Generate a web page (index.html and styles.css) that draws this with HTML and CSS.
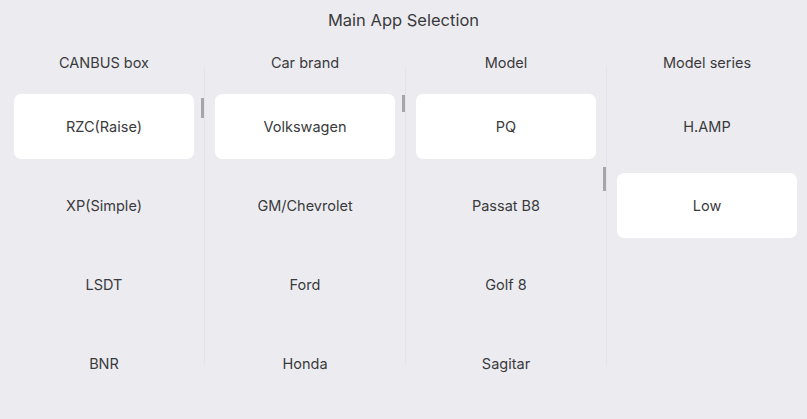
FILE: index.html
```html
<!DOCTYPE html>
<html>
<head>
<meta charset="utf-8">
<link rel="stylesheet" href="styles.css">
</head>
<body>
<div class="page">
  <h1 class="title">Main App Selection</h1>
  <div class="columns">
    <div class="col">
      <div class="col-head">CANBUS box</div>
      <div class="list">
        <div class="item selected">RZC(Raise)</div>
        <div class="item">XP(Simple)</div>
        <div class="item">LSDT</div>
        <div class="item">BNR</div>
      </div>
      <div class="thumb thumb-1"></div>
    </div>
    <div class="divider"></div>
    <div class="col">
      <div class="col-head">Car brand</div>
      <div class="list">
        <div class="item selected">Volkswagen</div>
        <div class="item">GM/Chevrolet</div>
        <div class="item">Ford</div>
        <div class="item">Honda</div>
      </div>
      <div class="thumb thumb-2"></div>
    </div>
    <div class="divider"></div>
    <div class="col">
      <div class="col-head">Model</div>
      <div class="list">
        <div class="item selected">PQ</div>
        <div class="item">Passat B8</div>
        <div class="item">Golf 8</div>
        <div class="item">Sagitar</div>
      </div>
      <div class="thumb thumb-3"></div>
    </div>
    <div class="divider"></div>
    <div class="col">
      <div class="col-head">Model series</div>
      <div class="list">
        <div class="item">H.AMP</div>
        <div class="item selected">Low</div>
      </div>
    </div>
  </div>
</div>
</body>
</html>
```

FILE: styles.css
```css
html, body {
  margin: 0;
  padding: 0;
  background: #ececf0;
}
body {
  font-family: Inter, "Noto Sans", sans-serif;
  color: #3a3a3d;
  width: 807px;
  height: 419px;
  overflow: hidden;
}
.page {
  display: flex;
  flex-direction: column;
}
.title {
  margin: 0;
  height: 40px;
  line-height: 40px;
  text-align: center;
  font-size: 16.5px;
  font-weight: 400;
}
.columns {
  display: grid;
  grid-template-columns: 200px 1px 200px 1px 200px 1px 200px;
  padding-left: 4px;
  align-items: start;
}
.col {
  position: relative;
  display: flex;
  flex-direction: column;
}
.col-head {
  height: 20px;
  line-height: 20px;
  margin-top: 13px;
  text-align: center;
  font-size: 14.5px;
}
.list {
  display: flex;
  flex-direction: column;
  gap: 14px;
  padding: 21px 10px 0 10px;
}
.item {
  height: 65px;
  display: flex;
  align-items: center;
  justify-content: center;
  font-size: 14.5px;
  border-radius: 7px;
}
.item.selected {
  background: #ffffff;
}
.divider {
  margin-top: 27px;
  height: 298px;
  background: #e4e4e8;
}
.thumb {
  position: absolute;
  right: 0;
  width: 3px;
  background: #a6a6aa;
}
.thumb-1 { top: 58px; height: 20px; }
.thumb-2 { top: 55px; height: 17px; }
.thumb-3 { top: 127px; height: 24px; }
```
